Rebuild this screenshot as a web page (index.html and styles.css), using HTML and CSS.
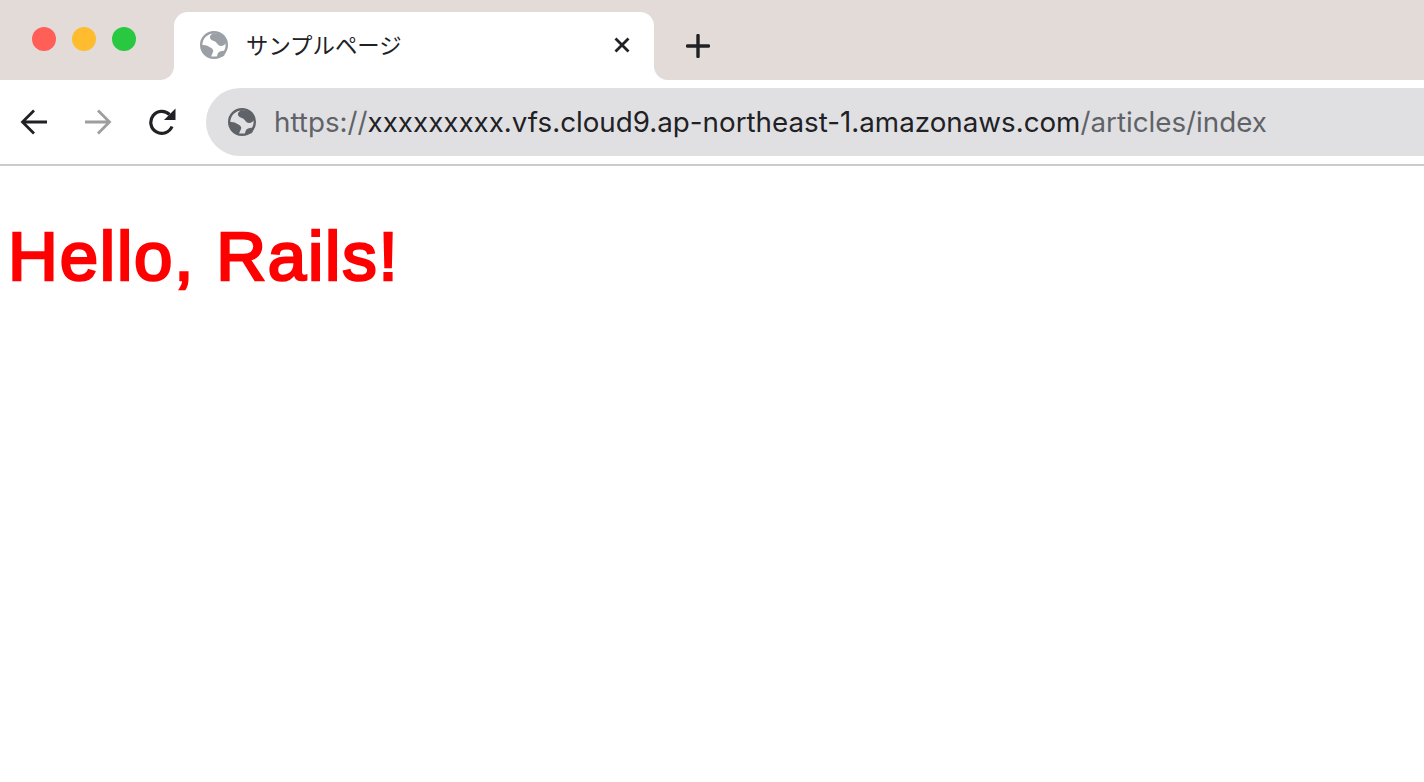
FILE: index.html
```html
<!DOCTYPE html>
<html lang="ja">
<head>
    <meta charset="utf-8">
    <meta name="viewport" content="width=device-width, initial-scale=1">
    <title>サンプルページ</title>
    <link rel="stylesheet" href="styles.css">
</head>
<body>
    <div class="tabstrip">
        <div class="lights">
            <span class="light light-red"></span>
            <span class="light light-yellow"></span>
            <span class="light light-green"></span>
        </div>
        <div class="tab">
            <svg class="globe globe-tab" viewBox="0 0 28 28">
                <circle cx="14" cy="14" r="12.8"/>
                <path d="M13 2C11 3.500 9.500 5 10 7C10.500 9 13 9.500 15 10.500C17 11.500 18 15 21 15C23.500 15 25.500 13 27 11L24 4Z"/>
                <path d="M1 14.500C4 13.500 7 14.500 9.500 16C12 17.500 14 18.500 13 21C12 23.500 11 25 10.500 27.500L4 23Z"/>
                <path d="M17 27.500C17 24 17.500 21.500 20 20.500C22.500 19.500 25 20 26.500 19L24 25Z"/>
            </svg>
            <span class="tab-title">サンプルページ</span>
            <svg class="tab-close" viewBox="0 0 16 16">
                <path d="M1.500 1.500l13 13M14.500 1.500l-13 13" stroke="#202124" stroke-width="2.800" fill="none"/>
            </svg>
        </div>
        <svg class="new-tab" viewBox="0 0 24 24">
            <path d="M12 1.500v21M1.500 12h21" stroke="#202124" stroke-width="3.400" stroke-linecap="round" fill="none"/>
        </svg>
    </div>

    <div class="toolbar">
        <svg class="nav-icon" viewBox="0 0 28 28">
            <path d="M27 14H3M14 2.500L2.500 14 14 25.500" stroke="#202124" stroke-width="2.800" fill="none"/>
        </svg>
        <svg class="nav-icon" viewBox="0 0 28 28">
            <path d="M1 14h24M14 2.500L25.500 14 14 25.500" stroke="#9e9e9e" stroke-width="2.800" fill="none"/>
        </svg>
        <svg class="nav-icon" viewBox="0 0 28 28">
            <path d="M24 18.500A11 11 0 1 1 21.500 6.500" stroke="#202124" stroke-width="3.200" fill="none"/>
            <path d="M27.500 0.500V12H16z" fill="#202124"/>
        </svg>
        <div class="omnibox">
            <svg class="globe" viewBox="0 0 28 28">
                <circle cx="14" cy="14" r="12.8"/>
                <path d="M13 2C11 3.500 9.500 5 10 7C10.500 9 13 9.500 15 10.500C17 11.500 18 15 21 15C23.500 15 25.500 13 27 11L24 4Z"/>
                <path d="M1 14.500C4 13.500 7 14.500 9.500 16C12 17.500 14 18.500 13 21C12 23.500 11 25 10.500 27.500L4 23Z"/>
                <path d="M17 27.500C17 24 17.500 21.500 20 20.500C22.500 19.500 25 20 26.500 19L24 25Z"/>
            </svg>
            <span class="url"><span class="url-dim">https://</span>xxxxxxxxx.vfs.cloud9.ap-northeast-1.amazonaws.com<span class="url-dim">/articles/index</span></span>
        </div>
    </div>

    <main class="page">
        <h1>Hello, Rails!</h1>
    </main>
</body>
</html>
```

FILE: styles.css
```css
* {
    margin: 0;
    padding: 0;
    box-sizing: border-box;
}

body {
    font-family: Inter, "Liberation Sans", "Noto Sans CJK JP", sans-serif;
    background: #fff;
    overflow: hidden;
}

.tabstrip {
    height: 80px;
    background: #e3dbd8;
    display: flex;
    align-items: flex-end;
}

.lights {
    width: 174px;
    height: 80px;
    padding: 27px 0 0 32px;
    display: flex;
    gap: 16px;
}

.light {
    width: 24px;
    height: 24px;
    border-radius: 50%;
}

.light-red {
    background: #ff5f57;
}

.light-yellow {
    background: #febc2e;
}

.light-green {
    background: #28c840;
}

.tab {
    position: relative;
    width: 480px;
    height: 68px;
    background: #fff;
    border-radius: 14px 14px 0 0;
    display: flex;
    align-items: center;
    padding: 0 24px 2px 26px;
}

.tab::before,
.tab::after {
    content: '';
    position: absolute;
    bottom: 0;
    width: 14px;
    height: 14px;
}

.tab::before {
    left: -14px;
    background: radial-gradient(circle at 0 0, transparent 13.5px, #fff 14.5px);
}

.tab::after {
    right: -14px;
    background: radial-gradient(circle at 100% 0, transparent 13.5px, #fff 14.5px);
}

.globe {
    width: 28px;
    height: 28px;
    flex: none;
    fill: #5f6368;
}

.globe circle {
    fill: #e0e0e3;
    stroke: #5f6368;
    stroke-width: 2.4;
}

.globe-tab {
    fill: #9aa0a6;
}

.globe-tab circle {
    fill: #fff;
    stroke: #9aa0a6;
}

.tab-title {
    margin-left: 18px;
    padding-bottom: 3px;
    flex: 1;
    font-size: 22.4px;
    color: #202124;
}

.tab-close {
    width: 16px;
    height: 16px;
}

.new-tab {
    width: 24px;
    height: 24px;
    margin: 0 0 22px 32px;
}

.toolbar {
    height: 86px;
    border-bottom: 2px solid #cbcbcb;
    display: flex;
    align-items: center;
    padding-left: 20px;
    gap: 36px;
}

.nav-icon {
    width: 28px;
    height: 28px;
    flex: none;
}

.omnibox {
    flex: 1;
    height: 68px;
    margin-left: -6px;
    background: #e0e0e3;
    border-radius: 34px 0 0 34px;
    display: flex;
    align-items: center;
    padding-left: 22px;
    gap: 18px;
}

.url {
    font-size: 27.75px;
    color: #202124;
    white-space: nowrap;
}

.url-dim {
    color: #5f6368;
}

.page {
    padding: 51px 8px 0;
}

h1 {
    font-family: "Liberation Sans", Arial, sans-serif;
    font-size: 69px;
    font-weight: 400;
    -webkit-text-stroke: 2.6px #f00;
    letter-spacing: 1.8px;
    line-height: 80px;
    color: #f00;
}
```
